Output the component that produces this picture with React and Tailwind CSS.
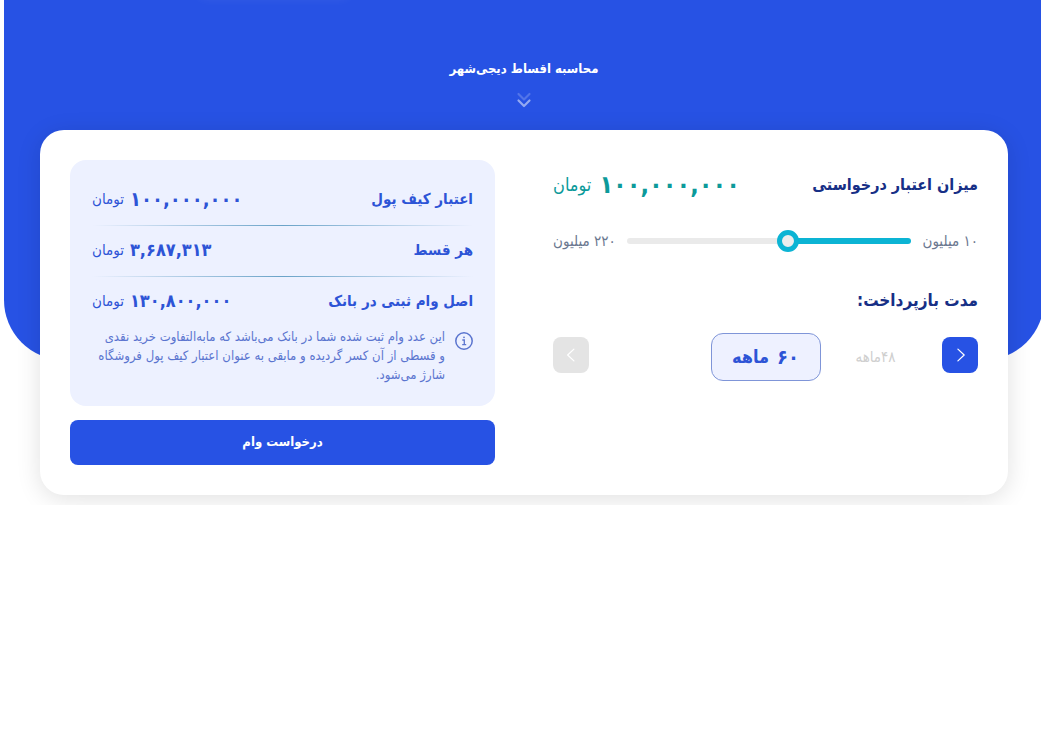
import { useState } from 'react'

const MIN_CREDIT = 10
const MAX_CREDIT = 220
const MONTHS = [12, 24, 36, 48, 60]

function toPersian(value) {
  return String(value).replace(/\d/g, d => '۰۱۲۳۴۵۶۷۸۹'[d])
}

function formatPrice(value) {
  return toPersian(value.toLocaleString('en-US'))
}

function Divider() {
  return <hr className="h-px border-0 bg-linear-to-r from-transparent via-[#6aa3c8] to-transparent" />
}

function SummaryRow({ label, value, large }) {
  return (
    <div className="flex h-[50px] items-center justify-between pb-0.5">
      <dt className="text-[15px] font-bold">{label}</dt>
      <dd className="flex items-center gap-1.5">
        <span className={large ? 'text-xl leading-6 font-bold' : 'text-lg leading-6 font-bold'}>{formatPrice(value)}</span>
        <span className="text-[15px]">تومان</span>
      </dd>
    </div>
  )
}

function Chevron({ left }) {
  return (
    <svg viewBox="0 0 24 24" className="size-5" fill="none" stroke="currentColor" strokeWidth="1.5" strokeLinecap="round" strokeLinejoin="round">
      <path d={left ? 'M15.500 5 8 12l7.500 7' : 'M9.500 5l7.500 7-7.500 7'} />
    </svg>
  )
}

export default function App() {
  const [credit, setCredit] = useState(100)
  const [index, setIndex] = useState(4)

  const filled = ((credit - MIN_CREDIT) / (MAX_CREDIT - MIN_CREDIT)) * 100
  const months = MONTHS[index]
  const loan = Math.round(credit * 1.308 * 1000) * 1000
  const installment = Math.round((credit * 3687313 * 60) / (100 * months))

  return (
    <main dir="rtl" className="overflow-hidden bg-white pb-[10px] font-['DejaVu_Sans_Condensed','DejaVu_Sans',sans-serif]">
      <div className="-mr-[3px] ml-1">
        <header className="relative flex h-[360px] flex-col items-center overflow-hidden rounded-b-[60px] bg-[#2752e4] pt-[57px] text-white">
          <div className="absolute -top-7 left-[190px] h-7 w-40 rounded-full bg-white/5 blur-[4px]" />
          <h1 className="text-[13px] leading-6 font-bold">محاسبه اقساط دیجی‌شهر</h1>
          <svg viewBox="0 0 16 16" className="mt-[11px] size-4" fill="none" stroke="currentColor" strokeWidth="2.2" strokeLinecap="round" strokeLinejoin="round">
            <path d="m2.500 2 5.500 5.500L13.500 2" opacity="0.2" />
            <path d="M2.500 8.500 8 14l5.500-5.500" opacity="0.5" />
          </svg>
        </header>

        <div className="relative -mt-[230px] px-9">
          <div className="grid gap-[58px] rounded-3xl bg-white p-[30px] shadow-[0_4px_24px_rgba(0,0,0,0.12)] md:grid-cols-2">
            <section>
              <div className="flex h-[50px] items-center justify-between">
                <label htmlFor="credit" className="text-base font-bold text-[#172f86]">میزان اعتبار درخواستی</label>
                <output htmlFor="credit" className="flex items-center gap-2 text-[#0c9a9a]">
                  <span className="text-[25px] leading-8 font-bold">{formatPrice(credit * 1000000)}</span>
                  <span className="text-lg">تومان</span>
                </output>
              </div>

              <div className="mt-5 flex items-center gap-[11px] text-[15px] leading-[22px] whitespace-nowrap text-[#6b7890]">
                <span>{toPersian(MIN_CREDIT)} میلیون</span>
                <input
                  id="credit"
                  type="range"
                  min={MIN_CREDIT}
                  max={MAX_CREDIT}
                  step="10"
                  value={credit}
                  onChange={e => setCredit(Number(e.target.value))}
                  style={{ '--filled': `${filled}%` }}
                  className="h-[22px] min-w-0 flex-1 cursor-pointer appearance-none bg-transparent [&::-webkit-slider-runnable-track]:h-1.5 [&::-webkit-slider-runnable-track]:rounded-full [&::-webkit-slider-runnable-track]:bg-[linear-gradient(to_left,#0cb4d4_var(--filled),#eaeaea_var(--filled))] [&::-webkit-slider-thumb]:-mt-2 [&::-webkit-slider-thumb]:size-[22px] [&::-webkit-slider-thumb]:appearance-none [&::-webkit-slider-thumb]:rounded-full [&::-webkit-slider-thumb]:border-5 [&::-webkit-slider-thumb]:border-[#0cb4d4] [&::-webkit-slider-thumb]:bg-[#ededed]"
                />
                <span>{toPersian(MAX_CREDIT)} میلیون</span>
              </div>

              <h2 className="mt-[34px] text-[17px] leading-7 font-bold text-[#172f86]">مدت بازپرداخت:</h2>

              <div className="mt-[19px] flex items-start justify-between">
                <button
                  type="button"
                  aria-label="قبلی"
                  disabled={index === 0}
                  onClick={() => setIndex(index - 1)}
                  className="mt-1 flex size-9 items-center justify-center rounded-lg bg-[#2752e4] text-white disabled:bg-[#e4e4e4]"
                >
                  <Chevron />
                </button>
                <div className="flex items-center">
                  <span className="w-[110px] text-center text-[15px] text-[#cfcfcf]">
                    {index > 0 && `${toPersian(MONTHS[index - 1])}ماهه`}
                  </span>
                  <span className="flex h-12 w-[110px] items-center justify-center gap-2 rounded-xl border border-[#7f95d8] bg-[#eef1ff] font-bold text-[#2d54d6]">
                    <span className="text-xl leading-6">{toPersian(months)}</span>
                    <span className="text-lg leading-6">ماهه</span>
                  </span>
                  <span className="w-[110px] text-center text-[15px] text-[#cfcfcf]">
                    {index < MONTHS.length - 1 && `${toPersian(MONTHS[index + 1])}ماهه`}
                  </span>
                </div>
                <button
                  type="button"
                  aria-label="بعدی"
                  disabled={index === MONTHS.length - 1}
                  onClick={() => setIndex(index + 1)}
                  className="mt-1 flex size-9 items-center justify-center rounded-lg bg-[#2752e4] text-white disabled:bg-[#e4e4e4]"
                >
                  <Chevron left />
                </button>
              </div>
            </section>

            <section>
              <div className="rounded-2xl bg-[#edf1ff] px-[22px] pt-[15px] pb-[22px] text-[#2d54d6]">
                <dl>
                  <SummaryRow label="اعتبار کیف پول" value={credit * 1000000} large />
                  <Divider />
                  <SummaryRow label="هر قسط" value={installment} />
                  <Divider />
                  <SummaryRow label="اصل وام ثبتی در بانک" value={loan} />
                </dl>
                <div className="flex gap-2.5 text-[#5b75cf]">
                  <svg viewBox="0 0 18 18" className="mt-[5px] size-[18px] shrink-0" fill="none" stroke="currentColor" strokeWidth="1.5">
                    <circle cx="9" cy="9" r="8.2" />
                    <path d="M7.300 8h2v4.500M7.200 12.700h4" strokeWidth="1.300" />
                    <circle cx="9" cy="5.300" r="0.9" fill="currentColor" stroke="none" />
                  </svg>
                  <p className="text-[13px] leading-[19px]">
                    این عدد وام ثبت شده شما در بانک می‌باشد که مابه‌التفاوت خرید نقدی و&nbsp;قسطی از آن کسر گردیده و مابقی به عنوان اعتبار کیف پول فروشگاه شارژ می‌شود.
                  </p>
                </div>
              </div>
              <button type="button" className="mt-3.5 h-[45px] w-full rounded-lg bg-[#2752e4] pb-0.5 text-[13px] font-bold text-white">
                درخواست وام
              </button>
            </section>
          </div>
        </div>
      </div>
    </main>
  )
}
